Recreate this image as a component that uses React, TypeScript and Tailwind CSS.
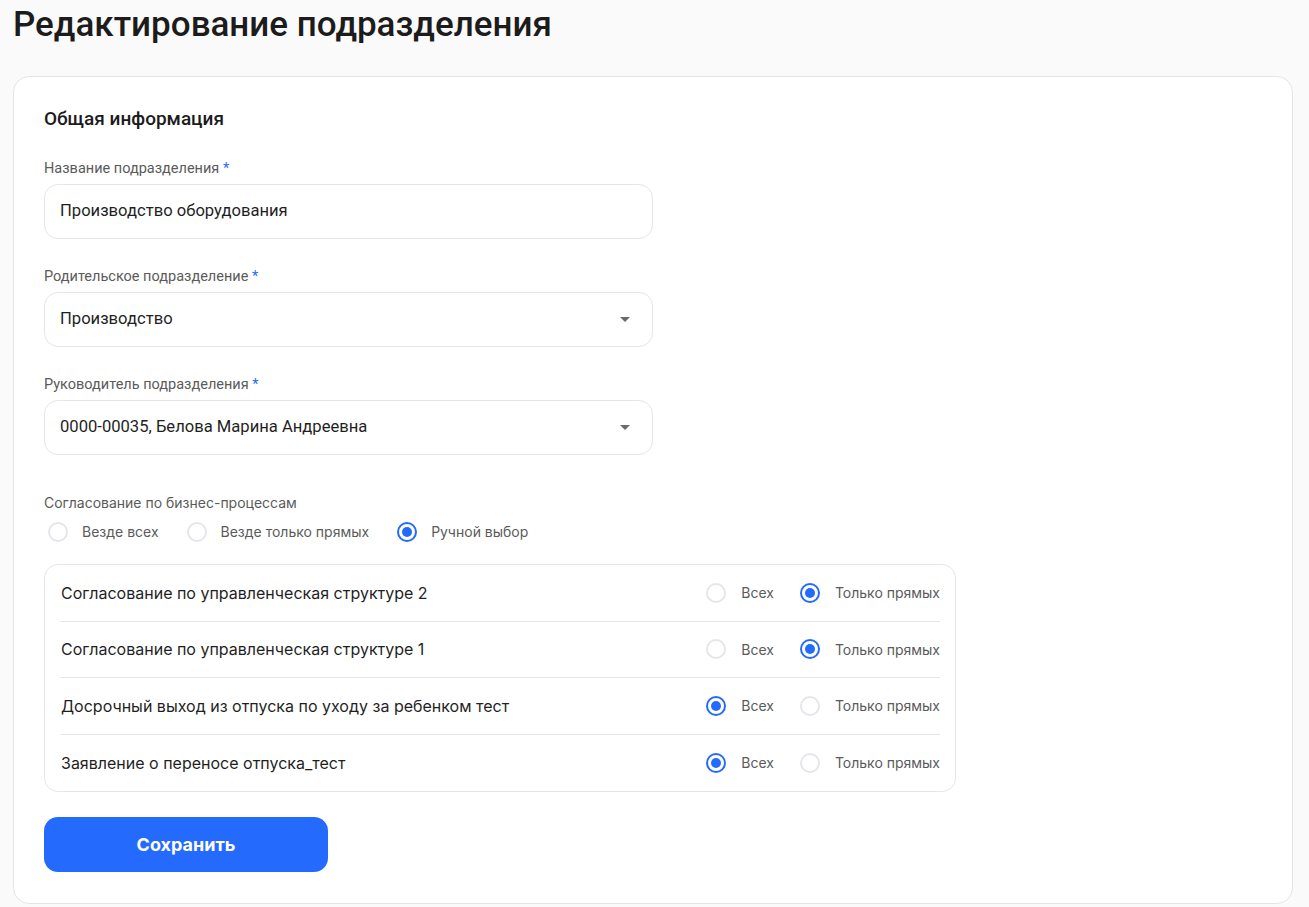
import React from "react";

const roboto = { fontFamily: "Roboto, 'Noto Sans', sans-serif" };
const inter = { fontFamily: "Inter, 'Noto Sans', sans-serif" };

function Radio({ checked }: { checked: boolean }) {
  return checked ? (
    <span className="box-border flex h-[20px] w-[20px] shrink-0 items-center justify-center rounded-full border-[2.5px] border-[#246BFD]">
      <span className="block h-[10px] w-[10px] rounded-full bg-[#246BFD]" />
    </span>
  ) : (
    <span className="box-border block h-[20px] w-[20px] shrink-0 rounded-full border-2 border-[#e4e6ea]" />
  );
}

function Caret() {
  return (
    <svg width="10" height="5" viewBox="0 0 10 5" className="shrink-0">
      <path d="M0 0 L10 0 L5 5 Z" fill="#6b6b6b" />
    </svg>
  );
}

function Field({ label, value, select }: { label: string; value: string; select?: boolean }) {
  return (
    <div className="flex flex-col">
      <div className="pt-[2px] text-[14.5px] leading-[20px] text-[#5b5b5b]" style={roboto}>
        {label} <span className="text-[#246BFD]">*</span>
      </div>
      <div className="mt-[5px] box-border flex h-[55px] w-[609px] items-center justify-between rounded-[14px] border border-[#e3e5e9] bg-white pl-[15px] pr-[22px]">
        <span className="text-[16.6px] text-[#1f1f1f]" style={roboto}>{value}</span>
        {select && <Caret />}
      </div>
    </div>
  );
}

const rows = [
  { name: "Согласование по управленческая структуре 2", all: false },
  { name: "Согласование по управленческая структуре 1", all: false },
  { name: "Досрочный выход из отпуска по уходу за ребенком тест", all: true },
  { name: "Заявление о переносе отпуска_тест", all: true },
];

export default function App() {
  return (
    <div className="min-h-[907px] w-full bg-[#fafafa] pl-[13px] pr-[16px] pt-[2px] pb-[4px]">
      <h1 className="text-[35px] font-medium leading-[46px] text-[#1c1c1c]" style={roboto}>
        Редактирование подразделения
      </h1>
      <div className="mt-[28px] rounded-[16px] border border-[#e3e5e9] bg-white px-[30px] pt-[30px] pb-[31px]">
        <div className="text-[19px] font-medium leading-[24px] text-[#1c1c1c]" style={roboto}>
          Общая информация
        </div>
        <div className="mt-[26px] flex flex-col gap-[26px]">
          <Field label="Название подразделения" value="Производство оборудования" />
          <Field label="Родительское подразделение" value="Производство" select />
          <Field label="Руководитель подразделения" value="0000-00035, Белова Марина Андреевна" select />
        </div>
        <div className="mt-[38px] text-[14px] leading-[20px] text-[#5b5b5b]" style={inter}>
          Согласование по бизнес-процессам
        </div>
        <div className="mt-[8px] flex items-center pl-[4px] text-[14px] text-[#5b5b5b]" style={inter}>
          <Radio checked={false} />
          <span className="ml-[14px]">Везде всех</span>
          <span className="ml-[28px] flex"><Radio checked={false} /></span>
          <span className="ml-[14px]">Везде только прямых</span>
          <span className="ml-[28px] flex"><Radio checked /></span>
          <span className="ml-[14px]">Ручной выбор</span>
        </div>
        <div className="mt-[22px] w-[912px] rounded-[14px] border border-[#e3e5e9] pl-[16px] pr-[15px]">
          {rows.map((r, i) => (
            <div
              key={i}
              className={`flex h-[56.5px] items-center justify-between ${i < rows.length - 1 ? "border-b border-[#e3e5e9]" : ""}`}
            >
              <span className="text-[16px] text-[#1f1f1f]" style={inter}>{r.name}</span>
              <div className="flex items-center text-[14px] text-[#5b5b5b]" style={inter}>
                <Radio checked={r.all} />
                <span className="ml-[15px]">Всех</span>
                <span className="ml-[26px] flex"><Radio checked={!r.all} /></span>
                <span className="ml-[15px]">Только прямых</span>
              </div>
            </div>
          ))}
        </div>
        <button
          className="mt-[25px] flex h-[55px] w-[284px] items-center justify-center rounded-[14px] bg-[#246BFD] text-[18px] font-bold text-white"
          style={inter}
        >
          Сохранить
        </button>
      </div>
    </div>
  );
}
